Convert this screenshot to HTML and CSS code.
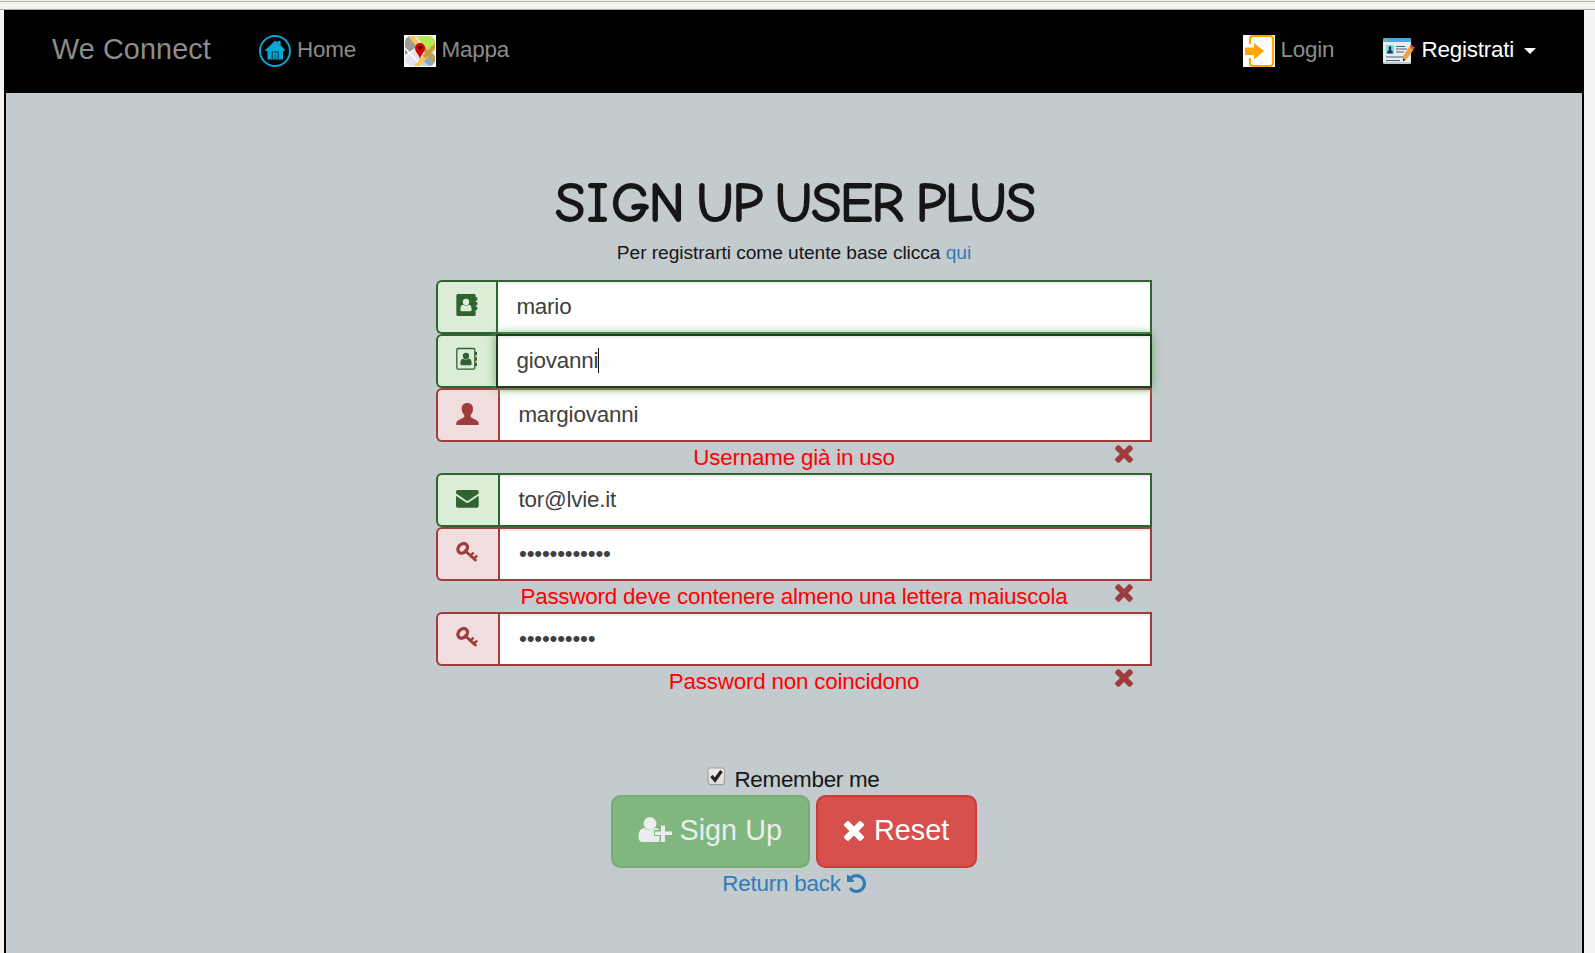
FILE: index.html
```html
<!DOCTYPE html>
<html lang="it">
<head>
<meta charset="utf-8">
<title>We Connect</title>
<link rel="stylesheet" href="styles.css">
</head>
<body>
<svg class="defs" aria-hidden="true">
  <symbol id="times" viewBox="110 366 1188 1188"><path fill="currentColor" d="M1298 1322q0 40-28 68l-136 136q-28 28-68 28t-68-28l-294-294-294 294q-28 28-68 28t-68-28l-136-136q-28-28-28-68t28-68l294-294-294-294q-28-28-28-68t28-68l136-136q28-28 68-28t68 28l294 294 294-294q28-28 68-28t68 28l136 136q28 28 28 68t-28 68l-294 294 294 294q28 28 28 68z"/></symbol>
  <symbol id="key" viewBox="90 245 72 72"><g fill="none" stroke="currentColor"><ellipse cx="113" cy="267" rx="16" ry="12.5" stroke-width="10" transform="rotate(-45 113 267)"/><path d="M121 275l30 27" stroke-width="9" stroke-linecap="round"/><path d="M134 290l12-10M144 299l13-10" stroke-width="7"/></g></symbol>
</svg>
<div class="chrome"></div>
<div class="page">
  <nav class="navbar">
    <a class="brand">We Connect</a>
    <a class="link home">
      <svg width="32" height="32" viewBox="0 0 32 32"><circle cx="16" cy="16" r="15" fill="none" stroke="#08a6d3" stroke-width="2"/><path fill="#08a6d3" d="M6 15.3l10.3-9.8 2.3 2V6h3v4.200l4.600 4.800-1.200 1H24v8.500H8.500V16H6.800z"/><path d="M13.200 24.500v-7.500h6v7.500M16.200 24.500v-5" fill="none" stroke="#003c50" stroke-width="1"/></svg>
      <span>Home</span>
    </a>
    <a class="link">
      <svg width="32" height="32" viewBox="0 0 32 32"><defs><clipPath id="mapclip"><rect x="1" y="1" width="30" height="30" rx="6"/></clipPath></defs><path fill="#fff" d="M0 0h32v32H0z"/><g clip-path="url(#mapclip)"><path fill="#e4e5ed" d="M0 0h32v32H0z"/><path fill="#9b9b9b" d="M0 0h8l8 11-13 9-3-1z"/><path fill="#b9e655" d="M12 0h20v12l-10 3z"/><path fill="#8ea8b8" d="M17 26l9-10 6 6v10h-9z"/><path fill="#b5d6e5" d="M19 25l7 7h-8z"/><path d="M6 0l8 10M34 8L10 34" stroke="#fdc652" stroke-width="4.500"/><path d="M17 11l15 15M20 22l12-12" stroke="#c79c3c" stroke-width="4"/><path d="M0 12l14 15M0 22l12-9" stroke="#fff" stroke-width="1.500"/></g><path d="M16 24c-1-5-5-7-5-11a5 5 0 0 1 10 0c0 4-4 6-5 11z" fill="#d90000"/><circle cx="16" cy="12.500" r="2" fill="#400"/></svg>
      <span>Mappa</span>
    </a>
    <span class="spacer"></span>
    <a class="link login">
      <svg width="32" height="32" viewBox="0 0 32 32"><path fill="#fff" d="M0 0h32v32H0z"/><path d="M7 9V4q0-3 3-3h17q3 0 3 3v24q0 3-3 3H10q-3 0-3-3v-5" fill="none" stroke="#ffa500" stroke-width="2.200"/><path d="M2 12.500h9V8l10 8-10 8.500V20H2z" fill="#ffa500"/></svg>
      <span>Login</span>
    </a>
    <a class="link active">
      <svg width="32" height="32" viewBox="0 0 32 32"><rect y="3" width="28" height="26" rx="2" fill="#e9ebec"/><path d="M0 7V5q0-2 2-2h24q2 0 2 2v2z" fill="#42ade0"/><circle cx="3" cy="5" r="1.300" fill="#f39a1f"/><rect x="3" y="10" width="8" height="8.500" fill="#7fd5dc"/><path d="M4 18.500q0-3 2-3.500-1-4 1-4t1 4q2 .5 2 3.500z" fill="#1b3958"/><path d="M13 11.500h9M13 14h11M13 17h8M3 22h18M3 25.500h14" stroke="#49617e" stroke-width="1"/><path d="M20.500 20.500l6-9 4 3-6 9-4 .8z" fill="#f0a238"/><path d="M26.500 11.500l1.500-1.800 4 3-1.500 1.800z" fill="#e24a45"/><path d="M20 23.500l3 1.200-3 1.600z" fill="#222"/><path d="M0 27q0 2 2 2h24q2 0 2-2z" fill="#c3c8ca"/></svg>
      <span>Registrati</span><i class="caret"></i>
    </a>
  </nav>

  <main>
    <h1>S<span class="slab">I</span>GN UP USER PLUS</h1>
    <p class="sub">Per registrarti come utente base clicca <a>qui</a></p>
    <form class="form">
      <div class="group ok narrow">
        <span class="addon"><svg class="ico" viewBox="90 69 72 72"><path fill="currentColor" d="M98 72h50q4 0 4 5v5h4q1 0 1 2v6q0 2-1 2h-4v4h4q1 0 1 2v6q0 2-1 2h-4v4h4q1 0 1 2v6q0 2-1 2h-4v13q0 5-4 5H98q-4 0-4-5V77q0-5 4-5z"/><g fill="#dcedd7"><circle cx="123" cy="96" r="9.500"/><path d="M106 119q0-15 9-15 8 5 16 0 9 0 9 15 0 5-5 5h-24q-5 0-5-5z"/></g></svg></span>
        <div class="field">mario</div>
      </div>
      <div class="group ok narrow">
        <span class="addon"><svg class="ico" viewBox="90 231 72 72"><rect x="95.500" y="235.500" width="54" height="62" rx="4" fill="none" stroke="currentColor" stroke-width="4"/><g fill="currentColor"><path d="M150 246h6v10h-6zM150 262h6v10h-6zM150 278h6v10h-6z"/><circle cx="123" cy="258" r="9.500"/><path d="M106 281q0-15 9-15 8 5 16 0 9 0 9 15 0 5-5 5h-24q-5 0-5-5z"/></g></svg></span>
        <div class="field focus">giovanni<i class="cursor"></i></div>
      </div>
      <div class="group bad">
        <span class="addon low"><svg class="ico" viewBox="90 396 72 72"><path fill="currentColor" d="M127 399c11 0 17 7 17 17 0 9-3 14-7 19v5c1 5 23 9 24 18v7H94v-7c1-9 23-13 24-18v-5c-4-5-8-10-8-19 0-10 6-17 17-17z"/></svg></span>
        <div class="field">margiovanni</div>
      </div>
      <div class="message">Username già in uso<svg class="cross"><use href="#times"/></svg></div>
      <div class="group ok">
        <span class="addon low"><svg class="ico" viewBox="90 81 72 72"><path fill="currentColor" d="M98 90h58q5 0 5 5v3q0 3-3 5l-27 18q-4 3-8 0L97 103q-4-2-4-5v-3q0-5 5-5zM93 107l29 20q5 3 10 0l29-20v31q0 5-5 5H98q-5 0-5-5z"/></svg></span>
        <div class="field">tor@lvie.it</div>
      </div>
      <div class="group bad">
        <span class="addon low"><svg class="ico"><use href="#key"/></svg></span>
        <div class="field dots">••••••••••••</div>
      </div>
      <div class="message">Password deve contenere almeno una lettera maiuscola<svg class="cross"><use href="#times"/></svg></div>
      <div class="group bad">
        <span class="addon low"><svg class="ico"><use href="#key"/></svg></span>
        <div class="field dots">••••••••••</div>
      </div>
      <div class="message">Password non coincidono<svg class="cross"><use href="#times"/></svg></div>
    </form>
    <label class="remember">
      <svg class="check" width="19" height="20" viewBox="0 0 19 20"><defs><linearGradient id="cb" x2="0" y2="1"><stop stop-color="#eee"/><stop offset="1" stop-color="#dcdcdc"/></linearGradient></defs><rect x="1" y="1.500" width="17" height="17" rx="2.500" fill="#b1b6b8"/><rect x="1" y="1" width="16.500" height="16.500" rx="2.500" fill="url(#cb)" stroke="#9b9b9b"/><path d="M4.500 9l3.500 4 6.500-9" fill="none" stroke="#222" stroke-width="3.300"/></svg>
      Remember me
    </label>
    <div class="buttons">
      <a class="btn signup"><svg width="34" height="27" viewBox="0 0 34 27"><g fill="currentColor"><circle cx="12" cy="7.500" r="6.500"/><path d="M6.500 12q5.500 4.500 11 0 2.500 0 4 2H16v6h5.500v6H5q-4.500 0-4.500-5Q.500 12 6.500 12z"/><path d="M23 9.500h4v6h7V19h-7v7h-4v-7h-6v-3.500h6z"/></g></svg><span>Sign Up</span></a>
      <a class="btn reset"><svg width="20" height="20"><use href="#times"/></svg><span>Reset</span></a>
    </div>
    <a class="back"><span>Return back</span><svg width="19" height="19" viewBox="128 128 1536 1536"><path fill="currentColor" d="M1664 896q0 156-61 298t-164 245-245 164-298 61q-172 0-327-72.500t-264-204.500q-7-10-6.500-22.500t8.500-20.500l137-138q10-9 25-9 16 2 23 12 73 95 179 147t225 52q104 0 198.500-40.500t163.500-109.500 109.500-163.500 40.500-198.500-40.500-198.500-109.500-163.500-163.500-109.500-198.500-40.500q-98 0-188 35.500t-160 101.500l137 138q31 30 14 69-17 40-59 40h-448q-26 0-45-19t-19-45v-448q0-42 40-59 39-17 69 14l130 129q107-101 244.500-156.500t284.500-55.500q156 0 298 61t245 164 164 245 61 298z"/></svg></a>
  </main>
</div>
</body>
</html>
```
FILE: styles.css
```css
* { box-sizing: border-box; }
body {
  margin: 0;
  height: 953px;
  overflow: hidden;
  display: flex;
  flex-direction: column;
  background: #f3f3f3;
  font: 22.4px/32px "Liberation Sans", Arial, sans-serif;
  letter-spacing: -.2px;
  color: #161616;
}
svg { flex: none; }
.defs { position: absolute; width: 0; height: 0; }
.chrome {
  height: 10px;
  flex: none;
  background: linear-gradient(#ecebe8 0 1px, #b1b1a9 1px 2px, #f4f3f0 2px 9px, #a7a7a2 9px 10px);
}
.page {
  flex: 1;
  width: 1580px;
  margin-left: 4px;
  border: solid #000;
  border-width: 0 2px;
  background: #c4cbce;
}
.navbar {
  height: 83px;
  display: flex;
  align-items: center;
  padding: 0 46px 1px 46px;
  background: #000;
  color: #8c8c8c;
}
.brand { width: 207px; font-size: 28.8px; letter-spacing: .1px; padding-bottom: 5px; }
.link { display: flex; align-items: center; gap: 6px; }
.link span { padding-bottom: 3px; }
.home { width: 144.500px; }
.login { width: 140px; }
.login span { margin-left: -1px; }
.active { color: #fff; }
.spacer { flex: 1; }
.caret {
  margin-left: 4px;
  border: 6.400px solid transparent;
  border-top-color: #fff;
  border-bottom: 0;
}

main { display: flex; flex-direction: column; align-items: center; padding-top: 77px; }
h1 {
  margin: 0 0 0 2px;
  height: 67px;
  font: 400 54px/67px "Comic Sans MS", "Comic Neue", Lato, sans-serif;
  letter-spacing: -1px;
  word-spacing: -4px;
  -webkit-text-stroke: 2px #161616;
  white-space: nowrap;
}
.slab { font-family: "Comic Sans MS", "Comic Neue", "DejaVu Sans Mono", monospace; letter-spacing: 3px; margin-left: 3px; }
.sub { margin: 0 0 12px; font-size: 19.200px; letter-spacing: -.07px; line-height: 31px; height: 31px; }
.sub a, .back { color: #337ab7; }

.form { width: 716px; }
.group { display: flex; height: 54px; }
.addon {
  width: 62px;
  padding: 11px 0 0 17px;
  border: 2px solid;
  border-right: 0;
  border-radius: 6px 0 0 6px;
}
.narrow .addon { width: 60px; }
.low { padding-top: 12px; }
.ico { width: 24px; height: 24px; display: block; }
.field {
  flex: 1;
  border: 2px solid;
  padding-left: 18.400px;
  line-height: 49px;
  background: #fff;
  box-shadow: inset 0 2px 2px rgba(0,0,0,.075);
}
.ok .addon { background: #dcedd7; color: #306232; border-color: #306232; }
.bad .addon { background: #f0dddd; color: #9f3d3d; border-color: #9f3d3d; }
.ok .field { border-color: #306232; color: #404040; }
.bad .field { border-color: #9f3d3d; color: #404040; }
.ok .focus {
  z-index: 1;
  border-color: #1e3c20;
  box-shadow: inset 0 2px 2px rgba(0,0,0,.075), 0 0 10px #67b168;
}
.cursor {
  display: inline-block;
  width: 1px;
  height: 25px;
  background: #111;
  vertical-align: -5px;
}
.dots { padding-left: 19px; }
.message {
  display: flex;
  justify-content: center;
  position: relative;
  height: 31px;
  line-height: 31px;
  color: #f00;
}
.cross { position: absolute; right: 19px; top: 3px; width: 18px; height: 18px; color: #9f3d3d; }

.remember { display: flex; height: 32px; margin: 66px 1px 0 0; gap: 8px; line-height: 33px; letter-spacing: -.270px; }
.check { margin-top: 4px; }
.buttons { display: flex; gap: 6px; }
.btn {
  height: 73px;
  display: flex;
  align-items: center;
  border: 2px solid;
  border-radius: 9.600px;
  font-size: 28.800px;
  letter-spacing: 0;
  gap: 8px;
  padding-left: 24.500px;
}
.btn span { padding-bottom: 3px; }
.signup { width: 199px; background: #7fb77f; border-color: #70ae73; color: #ebedee; }
.signup svg { margin-top: -4px; }
.reset { width: 161px; padding-left: 26px; gap: 10px; background: #d6504d; border-color: #cd3b37; color: #fff; }
.reset svg { margin-top: -2px; }
.back { display: flex; align-items: center; gap: 6px; }
.back svg { margin-top: -2px; }
```
